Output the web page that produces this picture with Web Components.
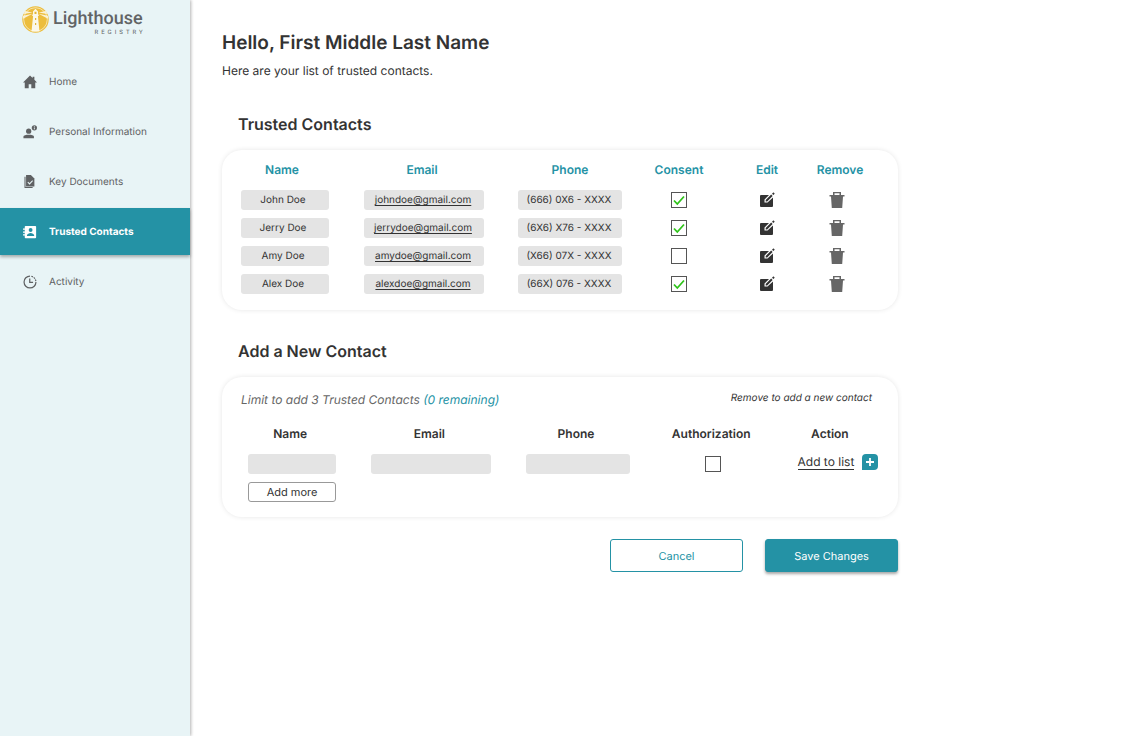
<!DOCTYPE html>
<html lang="en">
<head>
  <meta charset="UTF-8">
  <meta name="viewport" content="width=device-width, initial-scale=1.0">
  <title>Lighthouse Registry - Trusted Contacts</title>
  <style>
    :root {
      --teal: #2492a5;
      --ink: #333333;
      --grey: #5f6163;
      --field: #e4e4e4;
    }

    body {
      margin: 0;
      background: #ffffff;
      color: var(--ink);
      font-family: Inter, "Liberation Sans", sans-serif;
      font-size: 12px;
      text-rendering: geometricPrecision;
    }
  </style>
</head>
<body>
  <app-shell>
    <side-nav slot="nav">
      <nav-item icon="home">Home</nav-item>
      <nav-item icon="person">Personal Information</nav-item>
      <nav-item icon="document">Key Documents</nav-item>
      <nav-item icon="contacts" active>Trusted Contacts</nav-item>
      <nav-item icon="clock">Activity</nav-item>
    </side-nav>

    <page-intro heading="Hello, First Middle Last Name">Here are your list of trusted contacts.</page-intro>

    <section-card heading="Trusted Contacts">
      <contact-table></contact-table>
    </section-card>

    <section-card heading="Add a New Contact">
      <contact-form></contact-form>
    </section-card>

    <form-actions></form-actions>
  </app-shell>

  <script>
    const ICONS = {
      home: `<path d="M8 .5 0 8.500h2V15h4.500v-4.500h3V15H14V8.500h2L13 5.500V2h-2v1.500z"/>`,
      person: `<circle cx="6.500" cy="7" r="3"/><path d="M.5 15v-1.500C.5 11.500 3.500 11 6.500 11s6 .5 6 2.500V15z"/><circle cx="13" cy="3.200" r="3"/><path d="M13 2.800v2.200M13 1.200v.8" stroke="#e8f4f6"/>`,
      document: `<path d="M3.500 0h5.500L13 4v9H3.500z"/><path d="M2.300 2v12.300h8.700" fill="none" stroke="currentColor" stroke-width="1.200"/><path d="m5.500 8.200 2 2 3.500-3.700" fill="none" stroke="#e8f4f6" stroke-width="1.200"/>`,
      contacts: `<path fill-rule="evenodd" d="M3 1h11a1 1 0 0 1 1 1v12a1 1 0 0 1-1 1H3a1 1 0 0 1-1-1v-2H0v-1.500h2v-1.700H0V7.300h2V5.500H0V4h2V2a1 1 0 0 1 1-1zm5.700 2.500a2.200 2.200 0 1 0 0 4.400 2.200 2.200 0 0 0 0-4.400zM4.500 12.500h8.300V12c0-2-2.500-3-4.100-3s-4.200 1-4.200 3z"/>`,
      clock: `<g fill="none" stroke="currentColor" stroke-width="1.400"><path d="M8 1.200a6.800 6.800 0 1 0 6.800 6.800"/><path d="M9.500 1.400A6.800 6.800 0 0 1 14.700 7" stroke-dasharray="2 1"/><path d="M7.700 4v4.500h3.800"/></g>`,
      edit: `<path d="M2 3h8L5.500 7.500v3h3L14 5.500V14a1 1 0 0 1-1 1H2a1 1 0 0 1-1-1V4a1 1 0 0 1 1-1z"/><path d="M6.700 9.500V8l5.500-5.500 1.400 1.400L8.200 9.500zM13 1.700l1-1c.3-.3.6-.3.900 0l.5.500c.3.300.3.600 0 .9l-1 1z"/>`,
      trash: `<path fill-rule="evenodd" d="M4 0h8v3h3.500v1.500H14L13.200 16H2.800L2 4.500H.5V3H4zm1.500 1.300V3h5V1.300z"/>`,
      plus: `<path fill="#2492a5" d="M4 0h8a4 4 0 0 1 4 4v8a4 4 0 0 1-4 4H0V4a4 4 0 0 1 4-4z"/><path d="M8 4v8M4 8h8" stroke="#ffffff" stroke-width="1.800"/>`,
    };

    class UiIcon extends HTMLElement {
      connectedCallback() {
        this.attachShadow({ mode: "open" });
        this.shadowRoot.innerHTML = `
          <style>
            :host {
              display: block;
              width: 16px;
              height: 16px;
            }

            svg {
              display: block;
              width: 100%;
              height: 100%;
            }
          </style>
          <svg viewBox="0 0 16 16" fill="currentColor" aria-hidden="true">${ICONS[this.getAttribute("name")]}</svg>
        `;
      }
    }

    class AppShell extends HTMLElement {
      connectedCallback() {
        this.attachShadow({ mode: "open" });
        this.shadowRoot.innerHTML = `
          <style>
            :host {
              display: grid;
              grid-template-columns: 190px minmax(0, 1fr);
              min-height: 100vh;
            }

            main {
              box-sizing: border-box;
              max-width: 740px;
              padding: 30px 32px;
            }
          </style>
          <slot name="nav"></slot>
          <main><slot></slot></main>
        `;
      }
    }

    class BrandLogo extends HTMLElement {
      connectedCallback() {
        this.attachShadow({ mode: "open" });
        this.shadowRoot.innerHTML = `
          <style>
            :host {
              display: block;
            }

            a {
              display: flex;
              gap: 4px;
              color: #626466;
              text-decoration: none;
            }

            svg {
              width: 27px;
              height: 27px;
            }

            .words {
              display: flex;
              flex-direction: column;
              align-items: flex-end;
              padding-top: 2px;
              font-family: Roboto, "Liberation Sans", sans-serif;
            }

            .name {
              font-size: 18px;
              font-weight: 500;
              line-height: 22px;
            }

            .sub {
              font-size: 6px;
              line-height: 6px;
              letter-spacing: 3px;
              margin-right: -3px;
            }
          </style>
          <a href="#">
            <svg viewBox="0 0 27 27" aria-hidden="true">
              <circle cx="13.500" cy="13.500" r="13.200" fill="#ecbd3c"/>
              <circle cx="13.500" cy="13.500" r="11.800" fill="none" stroke="#f9ebc0" stroke-width=".8"/>
              <path d="M10.500 6.500 3 5 1.500 8zM10.500 7.800 1 9.800v3zM16.500 6.500 24 5l1.500 3zM16.500 7.800l9.500 2v3z" fill="#faf2d6"/>
              <path d="m11 5.500 2.500-2.700L16 5.500v3h.7V10h-.8l1.600 15.500h-8L11.100 10h-.8V8.500h.7z" fill="#fbf8ea"/>
              <path d="M12.500 5.800h2v2.200h-2zM13 12h1.200v2H13zM13 17h1.200v2H13z" fill="#e3b535"/>
            </svg>
            <span class="words">
              <span class="name">Lighthouse</span>
              <span class="sub">REGISTRY</span>
            </span>
          </a>
        `;
      }
    }

    class SideNav extends HTMLElement {
      connectedCallback() {
        this.attachShadow({ mode: "open" });
        this.shadowRoot.innerHTML = `
          <style>
            :host {
              display: block;
              background: #e8f4f6;
              box-shadow: 1px 0 3px rgba(0, 0, 0, 0.3);
            }

            brand-logo {
              height: 32px;
              padding: 6px 22px 20px;
            }

            nav {
              display: flex;
              flex-direction: column;
              gap: 3px;
            }
          </style>
          <brand-logo></brand-logo>
          <nav aria-label="Main"><slot></slot></nav>
        `;
      }
    }

    class NavItem extends HTMLElement {
      connectedCallback() {
        this.attachShadow({ mode: "open" });
        this.shadowRoot.innerHTML = `
          <style>
            :host {
              display: block;
            }

            a {
              display: flex;
              align-items: center;
              gap: 12px;
              height: 47px;
              padding: 0 23px;
              color: var(--grey);
              font-size: 10px;
              white-space: nowrap;
              text-decoration: none;
            }

            ui-icon {
              width: 14px;
              height: 14px;
            }

            :host([active]) a {
              background: var(--teal);
              box-shadow: 0 2px 3px rgba(0, 0, 0, 0.3);
              color: #ffffff;
              font-weight: 700;
            }
          </style>
          <a href="#">
            <ui-icon name="${this.getAttribute("icon")}"></ui-icon>
            <slot></slot>
          </a>
        `;
      }
    }

    class PageIntro extends HTMLElement {
      connectedCallback() {
        this.attachShadow({ mode: "open" });
        this.shadowRoot.innerHTML = `
          <style>
            :host {
              display: block;
              padding-bottom: 3px;
            }

            h1 {
              margin: 0 0 6px;
              font-size: 19px;
              font-weight: 600;
              line-height: 26px;
            }

            p {
              margin: 0;
              line-height: 18px;
            }
          </style>
          <h1>${this.getAttribute("heading")}</h1>
          <p><slot></slot></p>
        `;
      }
    }

    class SectionCard extends HTMLElement {
      connectedCallback() {
        this.attachShadow({ mode: "open" });
        this.shadowRoot.innerHTML = `
          <style>
            :host {
              display: block;
              margin-top: 29px;
            }

            h2 {
              margin: 0 16px 14px;
              font-size: 16px;
              font-weight: 600;
              line-height: 24px;
            }

            .card {
              border-radius: 20px;
              box-shadow: 0 0 5px rgba(0, 0, 0, 0.1);
            }
          </style>
          <h2>${this.getAttribute("heading")}</h2>
          <div class="card"><slot></slot></div>
        `;
      }
    }

    const CHECKBOX_CSS = `
      input[type="checkbox"] {
        appearance: none;
        display: block;
        box-sizing: border-box;
        width: 16px;
        height: 16px;
        margin: 0 auto;
        border: 1px solid #555555;
        background: #ffffff;
      }

      input[type="checkbox"]:checked {
        background: #ffffff url("data:image/svg+xml,%3Csvg xmlns='http://www.w3.org/2000/svg' viewBox='0 0 14 14'%3E%3Cpath d='M2 7.500 5.300 11 12 3.500' fill='none' stroke='%232fc41a' stroke-width='1.800'/%3E%3C/svg%3E");
      }
    `;

    const CONTACTS = [
      { name: "John Doe", email: "johndoe@gmail.com", phone: "(666) 0X6 - XXXX", consent: true },
      { name: "Jerry Doe", email: "jerrydoe@gmail.com", phone: "(6X6) X76 - XXXX", consent: true },
      { name: "Amy Doe", email: "amydoe@gmail.com", phone: "(X66) 07X - XXXX", consent: false },
      { name: "Alex Doe", email: "alexdoe@gmail.com", phone: "(66X) 076 - XXXX", consent: true },
    ];

    class ContactTable extends HTMLElement {
      connectedCallback() {
        this.attachShadow({ mode: "open" });
        this.shadowRoot.innerHTML = `
          <style>
            :host {
              display: block;
              padding: 2px 34px 12px 0;
            }

            table {
              width: 100%;
              table-layout: fixed;
              border-collapse: collapse;
            }

            th,
            td {
              padding: 0;
              text-align: center;
            }

            th {
              height: 34px;
              color: var(--teal);
              font-size: 12px;
              font-weight: 600;
            }

            th:first-child {
              padding-right: 6px;
            }

            th:nth-child(2) {
              padding-right: 4px;
            }

            td {
              height: 28px;
            }

            td:last-child {
              padding-right: 6px;
            }

            .chip {
              display: block;
              box-sizing: border-box;
              height: 20px;
              margin: 0 auto;
              padding-right: 4px;
              border-radius: 3px;
              background: var(--field);
              font-size: 10px;
              line-height: 20px;
              white-space: nowrap;
            }

            .name {
              width: 88px;
            }

            .email {
              width: 120px;
              padding-right: 2px;
            }

            .phone {
              width: 104px;
              padding-right: 2px;
            }

            a {
              color: inherit;
              text-underline-offset: 2px;
            }

            button {
              display: block;
              margin: 0 auto;
              padding: 0;
              border: 0;
              background: none;
              color: var(--ink);
              cursor: pointer;
            }

            .remove {
              color: #666666;
            }
            ${CHECKBOX_CSS}
          </style>
          <table>
            <colgroup>
              <col style="width: 126px">
              <col style="width: 152px">
              <col style="width: 140px">
              <col style="width: 78px">
              <col style="width: 98px">
              <col style="width: 48px">
            </colgroup>
            <thead>
              <tr><th>Name</th><th>Email</th><th>Phone</th><th>Consent</th><th>Edit</th><th>Remove</th></tr>
            </thead>
            <tbody>
              ${CONTACTS.map((c) => `
                <tr>
                  <td><span class="chip name">${c.name}</span></td>
                  <td><span class="chip email"><a href="mailto:${c.email}">${c.email}</a></span></td>
                  <td><span class="chip phone">${c.phone}</span></td>
                  <td><input type="checkbox" aria-label="Consent, ${c.name}" ${c.consent ? "checked" : ""}></td>
                  <td><button type="button" aria-label="Edit ${c.name}"><ui-icon name="edit"></ui-icon></button></td>
                  <td><button type="button" class="remove" aria-label="Remove ${c.name}"><ui-icon name="trash"></ui-icon></button></td>
                </tr>`).join("")}
            </tbody>
          </table>
        `;

        this.shadowRoot.querySelectorAll(".remove").forEach((button) => {
          button.addEventListener("click", () => button.closest("tr").remove());
        });
      }
    }

    class ContactForm extends HTMLElement {
      connectedCallback() {
        this.attachShadow({ mode: "open" });
        this.shadowRoot.innerHTML = `
          <style>
            :host {
              display: block;
              padding: 13px 0 15px;
            }

            .notes {
              display: flex;
              justify-content: space-between;
              margin: 0 26px 14px 19px;
              font-style: italic;
              line-height: 20px;
            }

            .notes p {
              margin: 0;
            }

            .limit {
              color: #666666;
            }

            .limit span {
              color: var(--teal);
            }

            .hint {
              font-size: 10px;
              line-height: 16px;
            }

            form {
              display: grid;
              grid-template-columns: 126fr 152fr 141fr 129fr 120fr;
              grid-template-rows: 22px 20px 20px;
              row-gap: 8px;
              justify-items: center;
              align-items: center;
              padding-left: 7px;
            }

            label,
            .label {
              align-self: start;
              padding-right: 4px;
              font-weight: 600;
              line-height: 20px;
            }

            .label {
              padding-right: 16px;
            }

            input[type="text"],
            input[type="email"],
            input[type="tel"] {
              box-sizing: border-box;
              height: 20px;
              padding: 0 8px;
              border: 0;
              border-radius: 3px;
              background: var(--field);
              color: inherit;
              font: inherit;
              font-size: 10px;
            }

            #name,
            .more {
              width: 88px;
            }

            #email {
              width: 120px;
            }

            #phone {
              width: 104px;
            }

            button {
              background: none;
              color: inherit;
              font: inherit;
              text-rendering: inherit;
              cursor: pointer;
            }

            .more {
              box-sizing: border-box;
              height: 20px;
              padding: 0;
              border: 1px solid #999999;
              border-radius: 3px;
              font-size: 11px;
              line-height: 18px;
            }

            .add {
              display: flex;
              align-items: center;
              gap: 8px;
              padding: 0 0 4px;
              border: 0;
            }

            .add span {
              border-bottom: 1px solid currentColor;
              line-height: 14px;
            }
            ${CHECKBOX_CSS}
          </style>
          <div class="notes">
            <p class="limit">Limit to add 3 Trusted Contacts <span>(0 remaining)</span></p>
            <p class="hint">Remove to add a new contact</p>
          </div>
          <form>
            <label for="name">Name</label>
            <label for="email">Email</label>
            <label for="phone">Phone</label>
            <label for="authorization">Authorization</label>
            <span class="label">Action</span>
            <input type="text" id="name">
            <input type="email" id="email">
            <input type="tel" id="phone">
            <input type="checkbox" id="authorization">
            <button type="button" class="add"><span>Add to list</span><ui-icon name="plus"></ui-icon></button>
            <button type="button" class="more">Add more</button>
          </form>
        `;
      }
    }

    class FormActions extends HTMLElement {
      connectedCallback() {
        this.attachShadow({ mode: "open" });
        this.shadowRoot.innerHTML = `
          <style>
            :host {
              display: flex;
              justify-content: flex-end;
              gap: 22px;
              margin-top: 22px;
            }

            button {
              box-sizing: border-box;
              width: 133px;
              height: 33px;
              border: 1px solid var(--teal);
              border-radius: 3px;
              background: #ffffff;
              color: var(--teal);
              font: inherit;
              font-size: 11px;
              text-rendering: inherit;
              cursor: pointer;
            }

            .save {
              background: var(--teal);
              box-shadow: 0 2px 3px rgba(0, 0, 0, 0.35);
              color: #ffffff;
            }
          </style>
          <button type="button">Cancel</button>
          <button type="button" class="save">Save Changes</button>
        `;
      }
    }

    customElements.define("ui-icon", UiIcon);
    customElements.define("app-shell", AppShell);
    customElements.define("brand-logo", BrandLogo);
    customElements.define("side-nav", SideNav);
    customElements.define("nav-item", NavItem);
    customElements.define("page-intro", PageIntro);
    customElements.define("section-card", SectionCard);
    customElements.define("contact-table", ContactTable);
    customElements.define("contact-form", ContactForm);
    customElements.define("form-actions", FormActions);
  </script>
</body>
</html>
